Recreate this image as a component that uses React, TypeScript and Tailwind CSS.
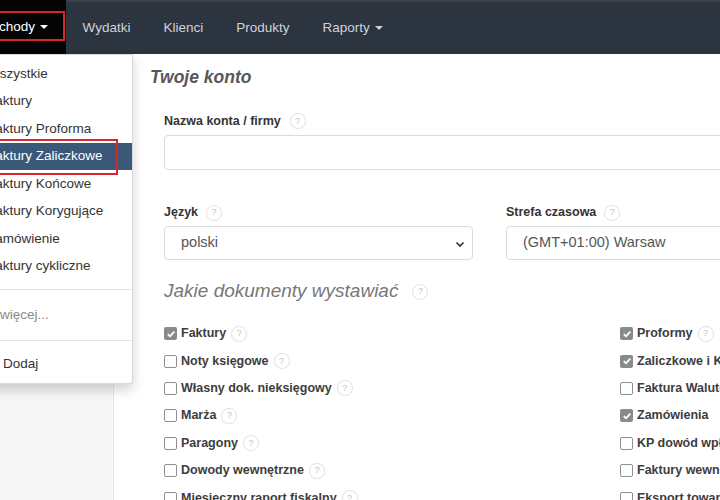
import React from "react";

const navItems = ["Wydatki", "Klienci", "Produkty"];

const menuItems = [
  "Wszystkie",
  "Faktury",
  "Faktury Proforma",
  "Faktury Zaliczkowe",
  "Faktury Końcowe",
  "Faktury Korygujące",
  "Zamówienie",
  "Faktury cykliczne",
];

const leftDocs: [string, boolean][] = [
  ["Faktury", true],
  ["Noty księgowe", false],
  ["Własny dok. nieksięgowy", false],
  ["Marża", false],
  ["Paragony", false],
  ["Dowody wewnętrzne", false],
  ["Miesięczny raport fiskalny", false],
];

const rightDocs: [string, boolean][] = [
  ["Proformy", true],
  ["Zaliczkowe i Końcowe", true],
  ["Faktura Walutowa", false],
  ["Zamówienia", true],
  ["KP dowód wpłaty", false],
  ["Faktury wewnętrzne", false],
  ["Eksport towarów", false],
];

const Caret = () => (
  <span className="ml-[5px] inline-block w-0 h-0 border-x-[4px] border-t-[4px] border-x-transparent border-t-current" />
);

const Help = ({ className = "" }: { className?: string }) => (
  <span
    className={`inline-flex items-center justify-center w-[16px] h-[16px] rounded-full border border-[#e6e6e6] bg-white text-[9px] leading-none text-[#c2c2c2] font-normal not-italic shadow-[0_0_1px_rgba(0,0,0,0.08)] ${className}`}
  >
    ?
  </span>
);

const Check = ({ checked }: { checked: boolean }) =>
  checked ? (
    <span className="w-[13px] h-[13px] rounded-[2px] bg-[#8a8a8a] flex items-center justify-center">
      <svg width="10" height="10" viewBox="0 0 10 10">
        <path d="M1.8 5.2 L4 7.3 L8.3 2.6" fill="none" stroke="#fff" strokeWidth="1.8" />
      </svg>
    </span>
  ) : (
    <span className="w-[13px] h-[13px] rounded-[2px] border border-[#8f8f8f] bg-white" />
  );

const DocRow = ({ label, checked, help }: { label: string; checked: boolean; help: boolean }) => (
  <div className="h-[27.4px] flex items-center whitespace-nowrap">
    <Check checked={checked} />
    <span className="ml-[4px] text-[12.5px] font-bold text-[#3d3d3d]">{label}</span>
    {help && <Help className="ml-[5px]" />}
  </div>
);

const Chevron = () => (
  <svg width="10" height="7" viewBox="0 0 10 7" className="absolute right-[7px] top-[14px]">
    <path d="M1.5 1.5 L5 5 L8.5 1.5" fill="none" stroke="#333" strokeWidth="1.7" />
  </svg>
);

export default function App() {
  return (
    <div className="relative w-[720px] h-[500px] overflow-hidden bg-white font-['Liberation_Sans',Arial,sans-serif]">
      {/* top navigation */}
      <nav className="flex h-[54px] bg-[#2c3440] border-t-2 border-[#3b424c] text-[13.5px] text-[#cfd3d8] whitespace-nowrap">
        <div className="-ml-[44px] -mt-[2px] pl-[16px] pr-[18px] bg-[#050505] text-white flex items-center">
          Przychody
          <Caret />
        </div>
        {navItems.map((n) => (
          <div key={n} className="px-[16.5px] flex items-center">
            {n}
          </div>
        ))}
        <div className="px-[16.5px] flex items-center">
          Raporty
          <Caret />
        </div>
      </nav>

      <div className="flex h-[446px]">
        <aside className="w-[114px] shrink-0 bg-[#f6f6f6] border-r border-[#e8e8e8]" />
        <main className="w-[800px] shrink-0 pl-[36px] pt-[11px]">
          <h1 className="text-[17.5px] leading-[24px] font-bold italic text-[#585858]">Twoje konto</h1>

          <div className="pl-[14px] mt-[23px]">
            <label className="flex items-center h-[18px] text-[12.5px] font-bold text-[#333]">
              Nazwa konta / firmy
              <Help className="ml-[9px]" />
            </label>
            <div className="mt-[5px] w-[651px] h-[35px] rounded-[4px] border border-[#dcdcdc] bg-white" />

            <div className="grid grid-cols-[309px_309px] gap-x-[33px] mt-[33.5px]">
              <div>
                <label className="flex items-center h-[18px] text-[12.5px] font-bold text-[#333]">
                  Język
                  <Help className="ml-[8px]" />
                </label>
                <div className="relative mt-[4.5px] h-[34px] rounded-[4px] border border-[#dcdcdc] flex items-center pl-[16px] text-[14.5px] text-[#555]">
                  polski
                  <Chevron />
                </div>
              </div>
              <div>
                <label className="flex items-center h-[18px] text-[12.5px] font-bold text-[#333]">
                  Strefa czasowa
                  <Help className="ml-[8px]" />
                </label>
                <div className="relative mt-[4.5px] h-[34px] rounded-[4px] border border-[#dcdcdc] flex items-center pl-[16px] text-[14.5px] text-[#555]">
                  (GMT+01:00) Warsaw
                  <Chevron />
                </div>
              </div>
            </div>

            <h2 className="mt-[19.5px] flex items-center h-[24px] text-[19px] italic text-[#777]">
              Jakie dokumenty wystawiać
              <Help className="ml-[14px]" />
            </h2>

            <div className="grid grid-cols-[456px_1fr] mt-[16.5px]">
              <div>
                {leftDocs.map(([l, c]) => (
                  <DocRow key={l} label={l} checked={c} help />
                ))}
              </div>
              <div>
                {rightDocs.map(([l, c]) => (
                  <DocRow key={l} label={l} checked={c} help={l === "Proformy"} />
                ))}
              </div>
            </div>
          </div>
        </main>
      </div>

      {/* Przychody dropdown */}
      <div className="absolute left-[-34px] top-[54px] w-[167px] bg-white border border-black/15 rounded-b-[4px] shadow-[0_6px_12px_rgba(0,0,0,0.175)] py-[5px] text-[13.5px] text-[#333] whitespace-nowrap">
        {menuItems.map((m) => (
          <div
            key={m}
            className={`h-[27.5px] flex items-center px-[20px] ${
              m === "Faktury Zaliczkowe" ? "bg-[#3a5878] text-white" : ""
            }`}
          >
            {m}
          </div>
        ))}
        <div className="mt-[9px] mb-[11px] h-px bg-[#e5e5e5]" />
        <div className="h-[27.5px] flex items-center pl-[33px] text-[#8a8a8a]">więcej...</div>
        <div className="mt-[11px] mb-[10px] h-px bg-[#e5e5e5]" />
        <div className="h-[27.5px] flex items-center pl-[36px]">Dodaj</div>
      </div>

      {/* highlight frames */}
      <div className="absolute left-[-10px] top-[11px] w-[75px] h-[30px] border-2 border-[#d9262b]" />
      <div className="absolute left-[-10px] top-[139px] w-[128px] h-[36px] border-2 border-[#d9262b]" />
    </div>
  );
}
